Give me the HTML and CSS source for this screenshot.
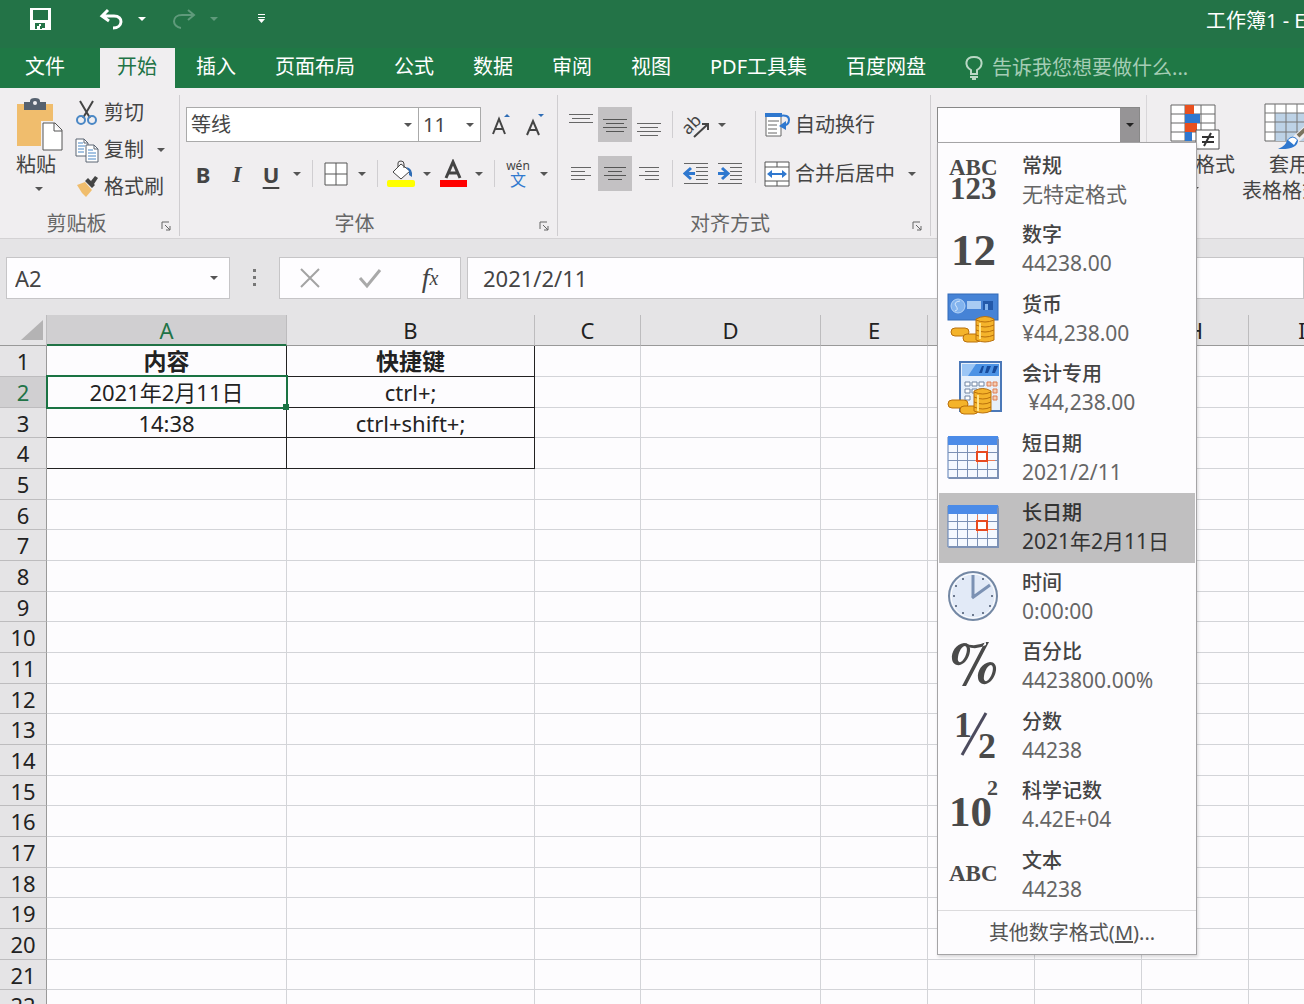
FILE: index.html
```html
<!DOCTYPE html>
<html lang="zh">
<head>
    <meta charset="UTF-8">
    <meta name="viewport" content="width=device-width, initial-scale=1.0">
    <title>工作簿1 - Excel</title>
    <link rel="stylesheet" href="styles.css">
</head>
<body>
    <header class="title-bar">
        <div class="quick-access">
            <button class="quick-btn" aria-label="保存">
                <svg width="24" height="24" viewBox="0 0 24 24"><path fill="#fff" fill-rule="evenodd" d="M1 1h21v22H1zM4 3v10h15V3zM6 16v6h2v-3h3v3h2v-1h3v-5z"/><path fill="#fff" d="M10 17h2v2h-2z"/></svg>
            </button>
            <button class="quick-btn undo" aria-label="撤消">
                <svg width="26" height="22" viewBox="0 0 26 22" fill="none" stroke="#fff" stroke-width="3"><path d="M9 2L3 8l7 5M3 8h12c10 0 9 12-1 12"/></svg>
            </button>
            <button class="caret" aria-label="撤消列表"></button>
            <button class="quick-btn redo" aria-label="恢复">
                <svg width="26" height="22" viewBox="0 0 26 22" fill="none" stroke="#5f9a7b" stroke-width="2"><path d="M17 2l6 5-6 5M23 7H11C0 7 1 19 10 20"/></svg>
            </button>
            <button class="caret faded" aria-label="恢复列表"></button>
            <button class="quick-btn more" aria-label="自定义快速访问工具栏">
                <svg width="10" height="12" viewBox="0 0 10 12"><path fill="#fff" d="M1 1h7v1H1zM1 4h7v1H1zM1 6h7L4.500 10z"/></svg>
            </button>
        </div>
        <div class="doc-title">工作簿1 - Excel</div>
    </header>

    <nav class="tabs">
        <button class="tab file">文件</button>
        <button class="tab active">开始</button>
        <button class="tab">插入</button>
        <button class="tab">页面布局</button>
        <button class="tab">公式</button>
        <button class="tab">数据</button>
        <button class="tab">审阅</button>
        <button class="tab">视图</button>
        <button class="tab">PDF工具集</button>
        <button class="tab">百度网盘</button>
        <label class="tell-me">
            <svg width="20" height="26" viewBox="0 0 20 26" fill="none" stroke="#b9d8c5" stroke-width="2"><path d="M7 19v-4C0 11 1 2 10 2s10 9 3 13v4z"/><path d="M6 22h8M8 24h4"/></svg>
            <input type="text" placeholder="告诉我您想要做什么...">
        </label>
    </nav>

    <section class="ribbon">
        <div class="group clipboard">
            <div class="group-body">
                <button class="big-btn">
                    <svg width="48" height="54" viewBox="0 0 48 54"><path fill="#f0bd6d" d="M1 6h36v42H1z"/><path fill="#56616f" d="M8 4h6V3q0-3 5-3t5 3v1h6v8H8z"/><circle cx="19" cy="5" r="2" fill="#f0eef0"/><path fill="#fff" stroke="#f0eef0" stroke-width="4" d="M27 25h12l7 7v20H27z"/><path fill="#fff" stroke="#555" d="M27 25h12l7 7v20H27zM38 25v8h8"/></svg>
                    <span>粘贴</span>
                    <i class="arrow"></i>
                </button>
                <div class="small-list">
                    <button class="small-btn">
                        <svg width="24" height="26" viewBox="0 0 24 26" fill="none"><path stroke="#444" stroke-width="2" d="M5 1l10 17M18 1L8 18"/><ellipse cx="6" cy="20" rx="4" ry="4" stroke="#4a87c5" stroke-width="2"/><ellipse cx="17" cy="20" rx="4" ry="4" stroke="#4a87c5" stroke-width="2"/></svg>
                        <span>剪切</span>
                    </button>
                    <button class="small-btn">
                        <svg width="24" height="26" viewBox="0 0 24 26" fill="#fff" stroke="#5a6473"><path d="M1 2h8l4 4v13H1z"/><path d="M11 8h8l4 4v13H11z"/><path stroke="#4a87c5" d="M3 6h5M3 9h7M3 12h6M3 15h6M13 13h5M13 16h8M13 19h8M13 22h8"/><path d="M9 2v4h4M19 8v4h4" fill="none"/></svg>
                        <span>复制</span>
                        <i class="arrow"></i>
                    </button>
                    <button class="small-btn">
                        <svg width="24" height="24" viewBox="0 0 24 24"><path fill="#f0bd6d" d="M2 10l8-3 7 8-6 7-4-4z"/><path fill="#444" d="M10 6l3-3 7 7-3 3zM16 6l4-5 3 2-4 6z"/></svg>
                        <span>格式刷</span>
                    </button>
                </div>
            </div>
            <div class="group-label"><span>剪贴板</span><button class="launcher" aria-label="剪贴板设置"><svg width="11" height="11" viewBox="0 0 11 11" fill="none" stroke="#666"><path d="M1 8V1h7M4 4l5 5M9 5v4H5"/></svg></button></div>
        </div>

        <div class="group font">
            <div class="group-body rows">
                <div class="tool-row">
                    <select class="combo font-name" aria-label="字体"><option>等线</option></select>
                    <select class="combo font-size" aria-label="字号"><option>11</option></select>
                    <button class="tool grow" aria-label="增大字号"><svg width="22" height="24" viewBox="0 0 22 24"><path fill="none" stroke="#444" stroke-width="2" d="M2 21L8 6l6 15M4 16h8"/><path fill="#2f6db5" d="M13 4l3-3 3 3z"/></svg></button>
                    <button class="tool" aria-label="减小字号"><svg width="22" height="24" viewBox="0 0 22 24"><path fill="none" stroke="#444" stroke-width="2" d="M2 22L8 8l6 14M4 17h8"/><path fill="#2f6db5" d="M13 1h6l-3 3z"/></svg></button>
                </div>
                <div class="tool-row">
                    <button class="tool letter bold">B</button>
                    <button class="tool letter italic">I</button>
                    <button class="tool letter underline">U</button>
                    <button class="caret" aria-label="下划线样式"></button>
                    <span class="sep"></span>
                    <button class="tool" aria-label="边框"><svg width="24" height="24" viewBox="0 0 24 24" fill="#fff" stroke="#555"><path d="M1 1h22v22H1zM12 1v22M1 12h22"/></svg></button>
                    <button class="caret" aria-label="边框样式"></button>
                    <span class="sep"></span>
                    <button class="tool" aria-label="填充颜色"><svg width="30" height="30" viewBox="0 0 30 30"><path fill="#fff" stroke="#444" d="M7 13l8-8 9 7-9 8z"/><path fill="none" stroke="#444" d="M12 8V4q0-2 3-2t3 3v4"/><path fill="#2f6db5" d="M20 8q7 1 6 10l-3-2v-4z"/><rect x="1" y="21" width="28" height="7" rx="2" fill="#ff0"/></svg></button>
                    <button class="caret" aria-label="选择填充颜色"></button>
                    <button class="tool" aria-label="字体颜色"><svg width="30" height="30" viewBox="0 0 30 30"><path fill="none" stroke="#444" stroke-width="3" d="M8 19l7-16 7 16M10 14h10"/><path fill="#f00" d="M2 21h27v7H2z"/></svg></button>
                    <button class="caret" aria-label="选择字体颜色"></button>
                    <span class="sep"></span>
                    <button class="tool phonetic" aria-label="拼音"><span>wén</span><span class="wen">文</span></button>
                    <button class="caret" aria-label="拼音设置"></button>
                </div>
            </div>
            <div class="group-label"><span>字体</span><button class="launcher" aria-label="字体设置"><svg width="11" height="11" viewBox="0 0 11 11" fill="none" stroke="#666"><path d="M1 8V1h7M4 4l5 5M9 5v4H5"/></svg></button></div>
        </div>

        <div class="group align">
            <div class="group-body">
                <div class="rows">
                    <div class="tool-row">
                        <button class="tool" aria-label="顶端对齐"><svg width="24" height="24" viewBox="0 0 24 24" stroke="#666"><path d="M0 1.500h24M3 5.500h18M0 9.500h24"/></svg></button>
                        <button class="tool on" aria-label="垂直居中"><svg width="24" height="24" viewBox="0 0 24 24" stroke="#555"><path d="M0 6.500h24M3 10.500h18M0 14.500h24M3 18.500h18"/></svg></button>
                        <button class="tool" aria-label="底端对齐"><svg width="24" height="24" viewBox="0 0 24 24" stroke="#666"><path d="M0 10.500h24M3 14.500h18M0 18.500h24M3 22.500h18"/></svg></button>
                        <span class="sep"></span>
                        <button class="tool" aria-label="方向"><svg width="28" height="28" viewBox="0 0 28 28"><text class="ab-text" x="1" y="20" transform="rotate(-45 9 16)">ab</text><path fill="none" stroke="#444" stroke-width="2" d="M12 26l14-13M20 13h6v6"/></svg></button>
                        <button class="caret" aria-label="方向列表"></button>
                    </div>
                    <div class="tool-row">
                        <button class="tool" aria-label="左对齐"><svg width="20" height="24" viewBox="0 0 20 24" stroke="#666"><path d="M0 5.500h20M0 9.500h14M0 13.500h20M0 17.500h14"/></svg></button>
                        <button class="tool on" aria-label="居中"><svg width="22" height="24" viewBox="0 0 22 24" stroke="#555"><path d="M0 5.500h22M4 9.500h14M0 13.500h22M4 17.500h14"/></svg></button>
                        <button class="tool" aria-label="右对齐"><svg width="20" height="24" viewBox="0 0 20 24" stroke="#666"><path d="M0 5.500h20M6 9.500h14M0 13.500h20M6 17.500h14"/></svg></button>
                        <span class="sep"></span>
                        <button class="tool" aria-label="减少缩进量"><svg width="26" height="24" viewBox="0 0 26 24"><path stroke="#666" d="M1 1.500h24M13 5.500h12M13 9.500h12M13 13.500h12M13 17.500h12M1 21.500h24"/><path fill="none" stroke="#2f78cf" stroke-width="3" d="M12 11.500H3M8 6l-6 5.500L8 17"/></svg></button>
                        <button class="tool" aria-label="增加缩进量"><svg width="26" height="24" viewBox="0 0 26 24"><path stroke="#666" d="M1 1.500h24M13 5.500h12M13 9.500h12M13 13.500h12M13 17.500h12M1 21.500h24"/><path fill="none" stroke="#2f78cf" stroke-width="3" d="M1 11.500h9M5 6l6 5.500L5 17"/></svg></button>
                    </div>
                </div>
                <span class="sep tall"></span>
                <div class="rows">
                    <button class="wide-btn">
                        <svg width="26" height="26" viewBox="0 0 26 26"><path fill="#fff" stroke="#666" d="M2 2h15v22H2z"/><path fill="#2f78cf" d="M1 1h17v4H1z"/><path stroke="#666" d="M4 9h11M4 13h9M4 17h9M4 21h9"/><path fill="none" stroke="#2f78cf" stroke-width="2" d="M15 4q10-2 10 4t-8 6"/><path fill="#2f78cf" d="M22 9v9l-7-4z"/></svg>
                        <span>自动换行</span>
                    </button>
                    <button class="wide-btn">
                        <svg width="26" height="26" viewBox="0 0 26 26"><path fill="#fff" stroke="#555" d="M1 1h24v24H1zM1 6h24M1 20h24M13 1v5M13 20v5"/><path stroke="#2f78cf" stroke-width="2" d="M6 13h14"/><path fill="#2f78cf" d="M8 9v8l-5-4zM18 9v8l5-4z"/></svg>
                        <span>合并后居中</span>
                        <i class="arrow"></i>
                    </button>
                </div>
            </div>
            <div class="group-label"><span>对齐方式</span><button class="launcher" aria-label="对齐设置"><svg width="11" height="11" viewBox="0 0 11 11" fill="none" stroke="#666"><path d="M1 8V1h7M4 4l5 5M9 5v4H5"/></svg></button></div>
        </div>

        <div class="group number">
            <div class="format-box">
                <input type="text" aria-label="数字格式">
                <button aria-label="打开数字格式列表"><i class="arrow"></i></button>
                <div class="format-menu">
                    <ul>
                        <li><button class="format-item">
                            <svg viewBox="0 0 56 54" class="serif"><text x="2" y="22" font-size="23">ABC</text><text x="3" y="46" font-size="31">123</text></svg>
                            <span><b>常规</b><em>无特定格式</em></span></button></li>
                        <li><button class="format-item">
                            <svg viewBox="0 0 56 54" class="serif"><text x="4" y="43" font-size="45">12</text></svg>
                            <span><b>数字</b><em>44238.00</em></span></button></li>
                        <li><button class="format-item">
                            <svg viewBox="0 0 56 54"><rect x="1" y="2" width="50" height="26" fill="#4683d6" stroke="#336bb8"/><circle cx="11" cy="14" r="7" fill="#82b3ee" stroke="#b4d3f7"/><path fill="none" stroke="#d6e8fc" d="M13 9q-7 1-4 5t-1 5"/><path fill="#a9cbf3" d="M20 9h14v8H20z"/><path fill="#2359aa" d="M36 9h10v9H36z"/><path fill="#82b3ee" d="M38 12h3v6h-3z"/><g fill="#f4b32b" stroke="#b9700c"><rect x="4" y="36" width="18" height="8" rx="4"/><rect x="16" y="42" width="18" height="8" rx="4"/><path d="M29 27q9-5 18 0v21q-9 4-18 0z"/><path fill="none" d="M29 28q9 4 18 0M29 33q9 4 18 0M29 38q9 4 18 0M29 43q9 4 18 0"/></g><path stroke="#ffe388" stroke-width="2" d="M33 31v16"/></svg>
                            <span><b>货币</b><em>¥44,238.00</em></span></button></li>
                        <li><button class="format-item">
                            <svg viewBox="0 0 56 54"><path fill="#e7f0fb" stroke="#4b78b8" stroke-width="2" d="M13 1h41v49H13z"/><path fill="#4d93e5" d="M15 3h37v12H15z"/><path fill="#9cc6f5" d="M15 3h14l-8 12h-6z"/><path fill="#174b9c" d="M32 12l3-7h2l-2 7zM38 12l2-7h4l-3 7zM45 12l2-7h4l-3 7z"/><g fill="#fff" stroke="#7185a2"><path d="M18 21h5v4h-5zM25 21h5v4h-5zM32 21h5v4h-5zM18 28h5v4h-5zM25 28h5v4h-5zM32 28h5v4h-5zM18 35h5v4h-5z"/></g><path fill="#f7ceb4" stroke="#dd7e55" d="M40 21h4v4h-4zM46 21h4v4h-4zM46 28h4v4h-4zM46 35h4v4h-4z"/><g fill="#f4b32b" stroke="#b9700c"><rect x="1" y="39" width="20" height="8" rx="4"/><rect x="13" y="45" width="18" height="8" rx="4"/><path d="M27 30q9-5 17 0v20q-8 4-17 0z"/><path fill="none" d="M27 31q9 4 17 0M27 36q9 4 17 0M27 41q9 4 17 0M27 46q9 4 17 0"/></g><path stroke="#ffe388" stroke-width="2" d="M31 34v16"/></svg>
                            <span><b>会计专用</b><em class="padded">¥44,238.00</em></span></button></li>
                        <li><button class="format-item">
                            <svg viewBox="0 0 56 54"><path fill="#f5f9ff" stroke="#5d7eb5" d="M1 6h50v41H1z"/><path fill="#4b8be8" d="M1 5h50v9H1z"/><path stroke="#7c91b5" d="M10.500 14v33M20.500 14v33M30.500 14v33M40.500 14v33M1 21.500h50M1 29.500h50M1 38.500h50"/><path fill="none" stroke="#7c91b5" stroke-width="2" d="M2 47h49V8"/><path stroke="#ef7c55" d="M30.500 15v18M40.500 15v18M28 29.500h20"/><path fill="#fff" stroke="#e84a20" stroke-width="2" d="M30 21h10v9H30z"/></svg>
                            <span><b>短日期</b><em>2021/2/11</em></span></button></li>
                        <li><button class="format-item selected">
                            <svg viewBox="0 0 56 54"><path fill="#f5f9ff" stroke="#5d7eb5" d="M1 6h50v41H1z"/><path fill="#4b8be8" d="M1 5h50v9H1z"/><path stroke="#7c91b5" d="M10.500 14v33M20.500 14v33M30.500 14v33M40.500 14v33M1 21.500h50M1 29.500h50M1 38.500h50"/><path fill="none" stroke="#7c91b5" stroke-width="2" d="M2 47h49V8"/><path stroke="#ef7c55" d="M30.500 15v18M40.500 15v18M28 29.500h20"/><path fill="#fff" stroke="#e84a20" stroke-width="2" d="M30 21h10v9H30z"/></svg>
                            <span><b>长日期</b><em>2021年2月11日</em></span></button></li>
                        <li><button class="format-item">
                            <svg viewBox="0 0 56 54"><circle cx="26" cy="26" r="24" fill="#e2eaf7" stroke="#7488a4" stroke-width="2"/><circle cx="26" cy="26" r="22" fill="none" stroke="#fff"/><path stroke="#7b91b3" stroke-width="3" d="M26 28V5M25 28l18-13"/><g fill="#46556d"><circle cx="16" cy="9" r="1"/><circle cx="36" cy="9" r="1"/><circle cx="9" cy="16" r="1"/><circle cx="7" cy="26" r="1"/><circle cx="9" cy="36" r="1"/><circle cx="16" cy="43" r="1"/><circle cx="26" cy="45" r="1"/><circle cx="36" cy="43" r="1"/><circle cx="43" cy="36" r="1"/><circle cx="45" cy="26" r="1"/></g></svg>
                            <span><b>时间</b><em>0:00:00</em></span></button></li>
                        <li><button class="format-item">
                            <svg viewBox="0 0 56 54" fill="#4a4a4a" fill-rule="evenodd"><path d="M17 4C9 5 4 13 5 20c1 7 8 8 13 3 6-6 8-19-1-19zm1 3c4 1 1 11-2 14-3 4-6 2-5-3 1-6 4-11 7-11z"/><path d="M43 23c-8 1-13 9-12 16s8 8 13 3c6-6 8-19-1-19zm1 3c4 1 1 11-2 14-3 4-6 2-5-3 1-6 4-11 7-11z"/><path d="M38 3h4L19 47h-4zM18 4q9 5 21-1v3q-11 6-19 1z"/></svg>
                            <span><b>百分比</b><em>4423800.00%</em></span></button></li>
                        <li><button class="format-item">
                            <svg viewBox="0 0 56 54" class="serif"><text x="7" y="28" font-size="36">1</text><text x="31" y="49" font-size="36">2</text><path stroke="#4c4b5e" stroke-width="3" d="M39 4L15 46"/></svg>
                            <span><b>分数</b><em>44238</em></span></button></li>
                        <li><button class="format-item">
                            <svg viewBox="0 0 56 54" class="serif"><text x="2" y="48" font-size="43">10</text><text x="40" y="17" font-size="22">2</text></svg>
                            <span><b>科学记数</b><em>4.42E+04</em></span></button></li>
                        <li><button class="format-item">
                            <svg viewBox="0 0 56 54" class="serif"><text x="2" y="33" font-size="23">ABC</text></svg>
                            <span><b>文本</b><em>44238</em></span></button></li>
                    </ul>
                    <button class="more-formats">其他数字格式(<u>M</u>)...</button>
                </div>
            </div>
        </div>

        <div class="group styles">
            <button class="big-btn">
                <svg width="50" height="54" viewBox="0 0 50 54"><path fill="#fff" stroke="#666" d="M1 7h44v36H1zM1 16h44M1 25h44M1 34h44M15 7v36M31 7v36"/><path fill="#e8501f" d="M15 7h9v9h-9zM15 25h12v9H15z"/><path fill="#2f78cf" d="M15 16h15v9H15zM15 34h7v9h-7z"/><path fill="#fff" stroke="#555" d="M26 32h23v19H26z"/><path stroke="#333" stroke-width="2" d="M32 39h12M32 44h12M41 35l-7 13"/></svg>
                <span>条件格式</span>
                <i class="arrow"></i>
            </button>
            <button class="big-btn">
                <svg width="50" height="54" viewBox="0 0 50 54"><path fill="#fff" stroke="#666" d="M1 6h48v37H1z"/><path fill="#bdd2e6" d="M11 15h38v28H11z"/><path stroke="#777" d="M11 6v37M22 6v37M33 6v37M44 6v37M1 15h48M1 24h48M1 34h48"/><path stroke="#f0eef0" stroke-width="8" d="M30 43l22-20"/><path stroke="#7b7460" stroke-width="4" d="M34 38l16-15"/><path fill="#2f78cf" d="M14 51q8-3 9-9 6-7 11 0 0 10-20 9z"/><path fill="#fff" d="M24 42q5-5 9 0l-3 5z"/></svg>
                <span>套用</span>
                <span class="with-arrow">表格格式<i class="arrow"></i></span>
            </button>
        </div>
    </section>

    <section class="formula-bar">
        <div class="name-box">
            <input type="text" value="A2" aria-label="名称框">
            <button class="caret" aria-label="名称列表"></button>
        </div>
        <svg class="dots" width="4" height="20" viewBox="0 0 4 20" fill="#777"><path d="M0 1h3v3H0zM0 8h3v3H0zM0 15h3v3H0z"/></svg>
        <div class="edit-buttons">
            <button aria-label="取消"><svg width="22" height="22" viewBox="0 0 22 22" fill="none" stroke="#a3a3a3" stroke-width="2"><path d="M2 2l18 18M20 2L2 20"/></svg></button>
            <button aria-label="输入"><svg width="24" height="22" viewBox="0 0 24 22" fill="none" stroke="#a9a9a9" stroke-width="3"><path d="M2 11l7 8L22 3"/></svg></button>
            <button class="fx" aria-label="插入函数">f<sub>x</sub></button>
        </div>
        <input class="formula" type="text" value="2021/2/11" aria-label="编辑栏">
    </section>

    <main class="sheet">
        <table>
            <colgroup>
                <col class="col-head"><col class="col-a"><col class="col-b"><col class="col-c"><col class="col-d"><col class="col-n"><col class="col-n"><col class="col-n"><col class="col-n"><col class="col-n">
            </colgroup>
            <thead>
                <tr>
                    <th class="corner"><svg width="22" height="20" viewBox="0 0 22 20"><path fill="#b4b3b4" d="M22 0v20H0z"/></svg></th>
                    <th class="current">A</th><th>B</th><th>C</th><th>D</th><th>E</th><th>F</th><th>G</th><th>H</th><th>I</th>
                </tr>
            </thead>
            <tbody>
                <tr><th>1</th><td class="boxed title">内容</td><td class="boxed title">快捷键</td><td></td><td></td><td></td><td></td><td></td><td></td><td></td></tr>
                <tr><th class="current">2</th><td class="boxed active-cell">2021年2月11日</td><td class="boxed">ctrl+;</td><td></td><td></td><td></td><td></td><td></td><td></td><td></td></tr>
                <tr><th>3</th><td class="boxed">14:38</td><td class="boxed">ctrl+shift+;</td><td></td><td></td><td></td><td></td><td></td><td></td><td></td></tr>
                <tr><th>4</th><td class="boxed"></td><td class="boxed"></td><td></td><td></td><td></td><td></td><td></td><td></td><td></td></tr>
                <tr><th>5</th><td></td><td></td><td></td><td></td><td></td><td></td><td></td><td></td><td></td></tr>
                <tr><th>6</th><td></td><td></td><td></td><td></td><td></td><td></td><td></td><td></td><td></td></tr>
                <tr><th>7</th><td></td><td></td><td></td><td></td><td></td><td></td><td></td><td></td><td></td></tr>
                <tr><th>8</th><td></td><td></td><td></td><td></td><td></td><td></td><td></td><td></td><td></td></tr>
                <tr><th>9</th><td></td><td></td><td></td><td></td><td></td><td></td><td></td><td></td><td></td></tr>
                <tr><th>10</th><td></td><td></td><td></td><td></td><td></td><td></td><td></td><td></td><td></td></tr>
                <tr><th>11</th><td></td><td></td><td></td><td></td><td></td><td></td><td></td><td></td><td></td></tr>
                <tr><th>12</th><td></td><td></td><td></td><td></td><td></td><td></td><td></td><td></td><td></td></tr>
                <tr><th>13</th><td></td><td></td><td></td><td></td><td></td><td></td><td></td><td></td><td></td></tr>
                <tr><th>14</th><td></td><td></td><td></td><td></td><td></td><td></td><td></td><td></td><td></td></tr>
                <tr><th>15</th><td></td><td></td><td></td><td></td><td></td><td></td><td></td><td></td><td></td></tr>
                <tr><th>16</th><td></td><td></td><td></td><td></td><td></td><td></td><td></td><td></td><td></td></tr>
                <tr><th>17</th><td></td><td></td><td></td><td></td><td></td><td></td><td></td><td></td><td></td></tr>
                <tr><th>18</th><td></td><td></td><td></td><td></td><td></td><td></td><td></td><td></td><td></td></tr>
                <tr><th>19</th><td></td><td></td><td></td><td></td><td></td><td></td><td></td><td></td><td></td></tr>
                <tr><th>20</th><td></td><td></td><td></td><td></td><td></td><td></td><td></td><td></td><td></td></tr>
                <tr><th>21</th><td></td><td></td><td></td><td></td><td></td><td></td><td></td><td></td><td></td></tr>
                <tr><th>22</th><td></td><td></td><td></td><td></td><td></td><td></td><td></td><td></td><td></td></tr>
            </tbody>
        </table>
    </main>
</body>
</html>
```
FILE: styles.css
```css
* {
    box-sizing: border-box;
}
body {
    margin: 0;
    height: 100vh;
    overflow: hidden;
    display: flex;
    flex-direction: column;
    font-family: "Noto Sans", "Noto Sans CJK SC", sans-serif;
    font-size: 20px;
    line-height: 26px;
    color: #444;
    background-color: #fdfcfe;
}
button, input, select {
    font: inherit;
    color: inherit;
    margin: 0;
    padding: 0;
    border: none;
    background: none;
    border-radius: 0;
}
button {
    display: flex;
    align-items: center;
    justify-content: center;
    white-space: nowrap;
}
svg {
    display: block;
    flex: none;
}
.arrow, .caret::before {
    content: "";
    display: block;
    border: 4px solid transparent;
    border-top-color: #555;
    border-bottom: none;
}
.caret {
    width: 18px;
    height: 35px;
}

/* title bar */
.title-bar {
    flex: none;
    display: flex;
    justify-content: space-between;
    height: 48px;
    padding-left: 29px;
    color: #fff;
    background-color: #237347;
    overflow: hidden;
}
.quick-access {
    display: flex;
    align-items: center;
    height: 38px;
}
.title-bar .caret::before {
    border-top-color: #fff;
}
.title-bar .faded::before {
    border-top-color: #5f9a7b;
}
.undo {
    margin-left: 46px;
    margin-right: 8px;
}
.redo {
    margin-left: 20px;
    margin-right: 8px;
}
.more {
    margin-left: 34px;
}
.doc-title {
    width: 98px;
    padding-top: 8px;
    white-space: nowrap;
}

/* ribbon tabs */
.tabs {
    flex: none;
    display: flex;
    gap: 3px;
    height: 40px;
    color: #fff;
    background-color: #1f7845;
}
.tab {
    padding: 0 18px 2px;
}
.tab.file {
    padding-left: 25px;
    margin-right: 14px;
}
.tab.active {
    padding-left: 17px;
    color: #217346;
    background-color: #f0eef0;
}
.tell-me {
    flex: 1;
    display: flex;
    align-items: center;
    gap: 8px;
    padding-left: 17px;
}
.tell-me input {
    flex: 1;
    min-width: 0;
}
.tell-me input::placeholder {
    color: #a5cdb5;
    opacity: 1;
}

/* ribbon */
.ribbon {
    flex: none;
    display: flex;
    height: 151px;
    padding: 7px 0 2px;
    background-color: #f0eef0;
    border-bottom: 1px solid #d4d2d4;
}
.group {
    flex: none;
    display: flex;
    flex-direction: column;
    justify-content: space-between;
    padding: 0 6px;
    border-right: 1px solid #cfcdd0;
}
.group-body {
    display: flex;
}
.group-label {
    display: flex;
    align-items: center;
    height: 24px;
    color: #666;
}
.group-label span {
    flex: 1;
    padding-right: 14px;
    text-align: center;
}
.launcher {
    width: 14px;
    padding-top: 4px;
}
.big-btn {
    flex-direction: column;
    justify-content: flex-start;
}
.big-btn .arrow {
    margin-top: 9px;
}
.clipboard {
    padding-left: 14px;
}
.clipboard .group-label span {
    padding-right: 20px;
}
.clipboard .big-btn {
    align-items: flex-start;
    padding: 3px 0 0 2px;
}
.clipboard .big-btn .arrow {
    margin-left: 19px;
}
.small-list {
    display: flex;
    flex-direction: column;
    padding-left: 11px;
}
.small-btn {
    justify-content: flex-start;
    gap: 5px;
    width: 98px;
    height: 37px;
}
.small-btn .arrow {
    margin-left: 8px;
}
.clipboard .small-btn {
    padding-bottom: 2px;
}
.rows {
    display: flex;
    flex-direction: column;
    gap: 14px;
    padding-top: 12px;
}
.tool-row {
    display: flex;
    height: 35px;
}
.tool-row > * {
    flex: none;
}
.tool {
    width: 34px;
    height: 35px;
}
.tool.on {
    background-color: #c3c1c3;
}
.sep {
    width: 1px;
    margin: 4px 6px;
    background-color: #d0ced1;
}
.sep.tall {
    margin: 16px 8px 8px;
}
.font {
    width: 378px;
}
.combo {
    appearance: none;
    padding: 0 4px;
    border: 1px solid #aaa;
    background: #fff url("data:image/svg+xml,%3Csvg xmlns='http://www.w3.org/2000/svg' width='8' height='4'%3E%3Cpath d='M0 0h8L4 4z' fill='%23555'/%3E%3C/svg%3E") no-repeat right 6px center;
}
.font-name {
    width: 233px;
}
.font-size {
    width: 63px;
    margin-left: -1px;
}
.tool.grow {
    margin-left: 4px;
}
.letter {
    font-size: 22px;
    font-weight: bold;
}
.italic {
    font-family: "Liberation Serif", serif;
    font-size: 24px;
    font-style: italic;
}
.underline {
    text-decoration: underline;
    text-decoration-thickness: 2px;
    text-underline-offset: 4px;
}
.phonetic {
    flex-direction: column;
    font-size: 12px;
    line-height: 12px;
}
.phonetic .wen {
    color: #2f78cf;
    font-size: 16px;
    line-height: 16px;
}
.ab-text {
    font-size: 17px;
    fill: #444;
}
.wide-btn {
    justify-content: flex-start;
    gap: 5px;
    height: 35px;
}
.wide-btn .arrow {
    margin: 0 8px;
}

/* number format list */
.number {
    width: 216px;
    border-right-color: #d8d6d9;
}
.format-box {
    position: relative;
    display: flex;
    height: 36px;
    margin-top: 12px;
    border: 1px solid #888;
}
.format-box > input {
    flex: 1;
    min-width: 0;
    background-color: #fefdff;
}
.format-box > button {
    width: 19px;
    background-color: #969496;
}
.format-box > button .arrow {
    border-top-color: #222;
}
.format-menu {
    position: absolute;
    top: 34px;
    left: -1px;
    z-index: 10;
    width: 260px;
    border: 1px solid #a5a4a6;
    background-color: #fdfcfe;
    box-shadow: 1px 2px 3px rgba(0,0,0,0.15);
}
.format-menu ul {
    list-style: none;
    margin: 0;
    padding: 3px 1px 0;
}
.format-item {
    width: 100%;
    height: 69px;
    justify-content: flex-start;
    padding: 0 0 2px 8px;
    text-align: left;
}
li:nth-child(even) .format-item {
    height: 70px;
}
.format-item svg {
    width: 56px;
    height: 54px;
}
.format-item span {
    margin-left: 19px;
}
.format-item b, .format-item em {
    display: block;
    line-height: 29px;
}
.format-item b {
    font-weight: 500;
}
.format-item em {
    font-style: normal;
    font-size: 21px;
    color: #666;
}
.format-item em.padded {
    padding-left: 6px;
}
.format-item.selected {
    background-color: #c0bfc0;
}
.selected b, .selected em {
    color: #333;
}
.serif text {
    font-family: "Liberation Serif", serif;
    font-weight: bold;
    fill: #4a4a4a;
}
.more-formats {
    width: 100%;
    height: 44px;
    padding-left: 10px;
    color: #555;
    border-top: 1px solid #dcdbdd;
}
.styles {
    flex: 1;
    flex-direction: row;
    justify-content: flex-start;
    min-width: 0;
    border: none;
    overflow: hidden;
}
.styles .big-btn {
    flex: none;
    padding: 3px 2px 0;
    margin-right: 3px;
}
.with-arrow {
    display: flex;
    align-items: center;
    gap: 6px;
}
.with-arrow .arrow {
    margin: 0;
}

/* formula bar */
.formula-bar {
    flex: none;
    display: flex;
    align-items: center;
    height: 76px;
    padding: 1px 0 0 6px;
    font-size: 22px;
    background-color: #e5e4e6;
}
.name-box, .edit-buttons, .formula {
    height: 42px;
    border: 1px solid #c6c5c7;
    background-color: #fefdff;
}
.name-box {
    display: flex;
    align-items: center;
    width: 224px;
    padding: 0 6px 0 8px;
}
.name-box input {
    flex: 1;
    min-width: 0;
}
.dots {
    margin: 0 22px 0 23px;
}
.edit-buttons {
    display: flex;
    width: 182px;
}
.edit-buttons button {
    flex: 1;
}
.fx {
    font-family: "Liberation Serif", serif;
    font-size: 28px;
    font-style: italic;
}
.fx sub {
    font-size: 20px;
}
.formula {
    flex: 1;
    min-width: 0;
    margin-left: 6px;
    padding-left: 15px;
}

/* cells */
.sheet {
    flex: 1;
    overflow: hidden;
}
table {
    table-layout: fixed;
    width: 1356px;
    border-collapse: separate;
    border-spacing: 0;
    font-size: 22px;
    line-height: 26px;
    color: #222;
}
.col-head { width: 47px; }
.col-a { width: 240px; }
.col-b { width: 248px; }
.col-c { width: 106px; }
.col-d { width: 180px; }
.col-n { width: 107px; }
th, td {
    height: 31px;
    padding: 0;
    text-align: center;
    font-weight: normal;
    white-space: nowrap;
    border-right: 1px solid #d3d4d8;
    border-bottom: 1px solid #d3d4d8;
}
tbody tr:nth-child(3n) > * {
    height: 30px;
}
th {
    background-color: #e5e4e6;
    border-color: #bdbcbe;
}
thead th {
    border-bottom-color: #999;
}
tbody th {
    border-right-color: #999;
}
.corner svg {
    margin: 0 0 0 21px;
}
th.current {
    color: #217346;
    background-color: #d0cfd1;
}
thead th.current {
    border-bottom: 2px solid #217346;
}
tbody th.current {
    border-right-color: #217346;
}
.boxed {
    border-color: #222;
}
.title {
    font-size: 23px;
    font-weight: bold;
    line-height: 26px;
}
.active-cell {
    position: relative;
}
.active-cell::before {
    content: "";
    position: absolute;
    inset: -2px -2px -2px -1px;
    border: 2px solid #1a7343;
}
.active-cell::after {
    content: "";
    position: absolute;
    right: -3px;
    bottom: -3px;
    width: 6px;
    height: 6px;
    background-color: #1a7343;
}
```
